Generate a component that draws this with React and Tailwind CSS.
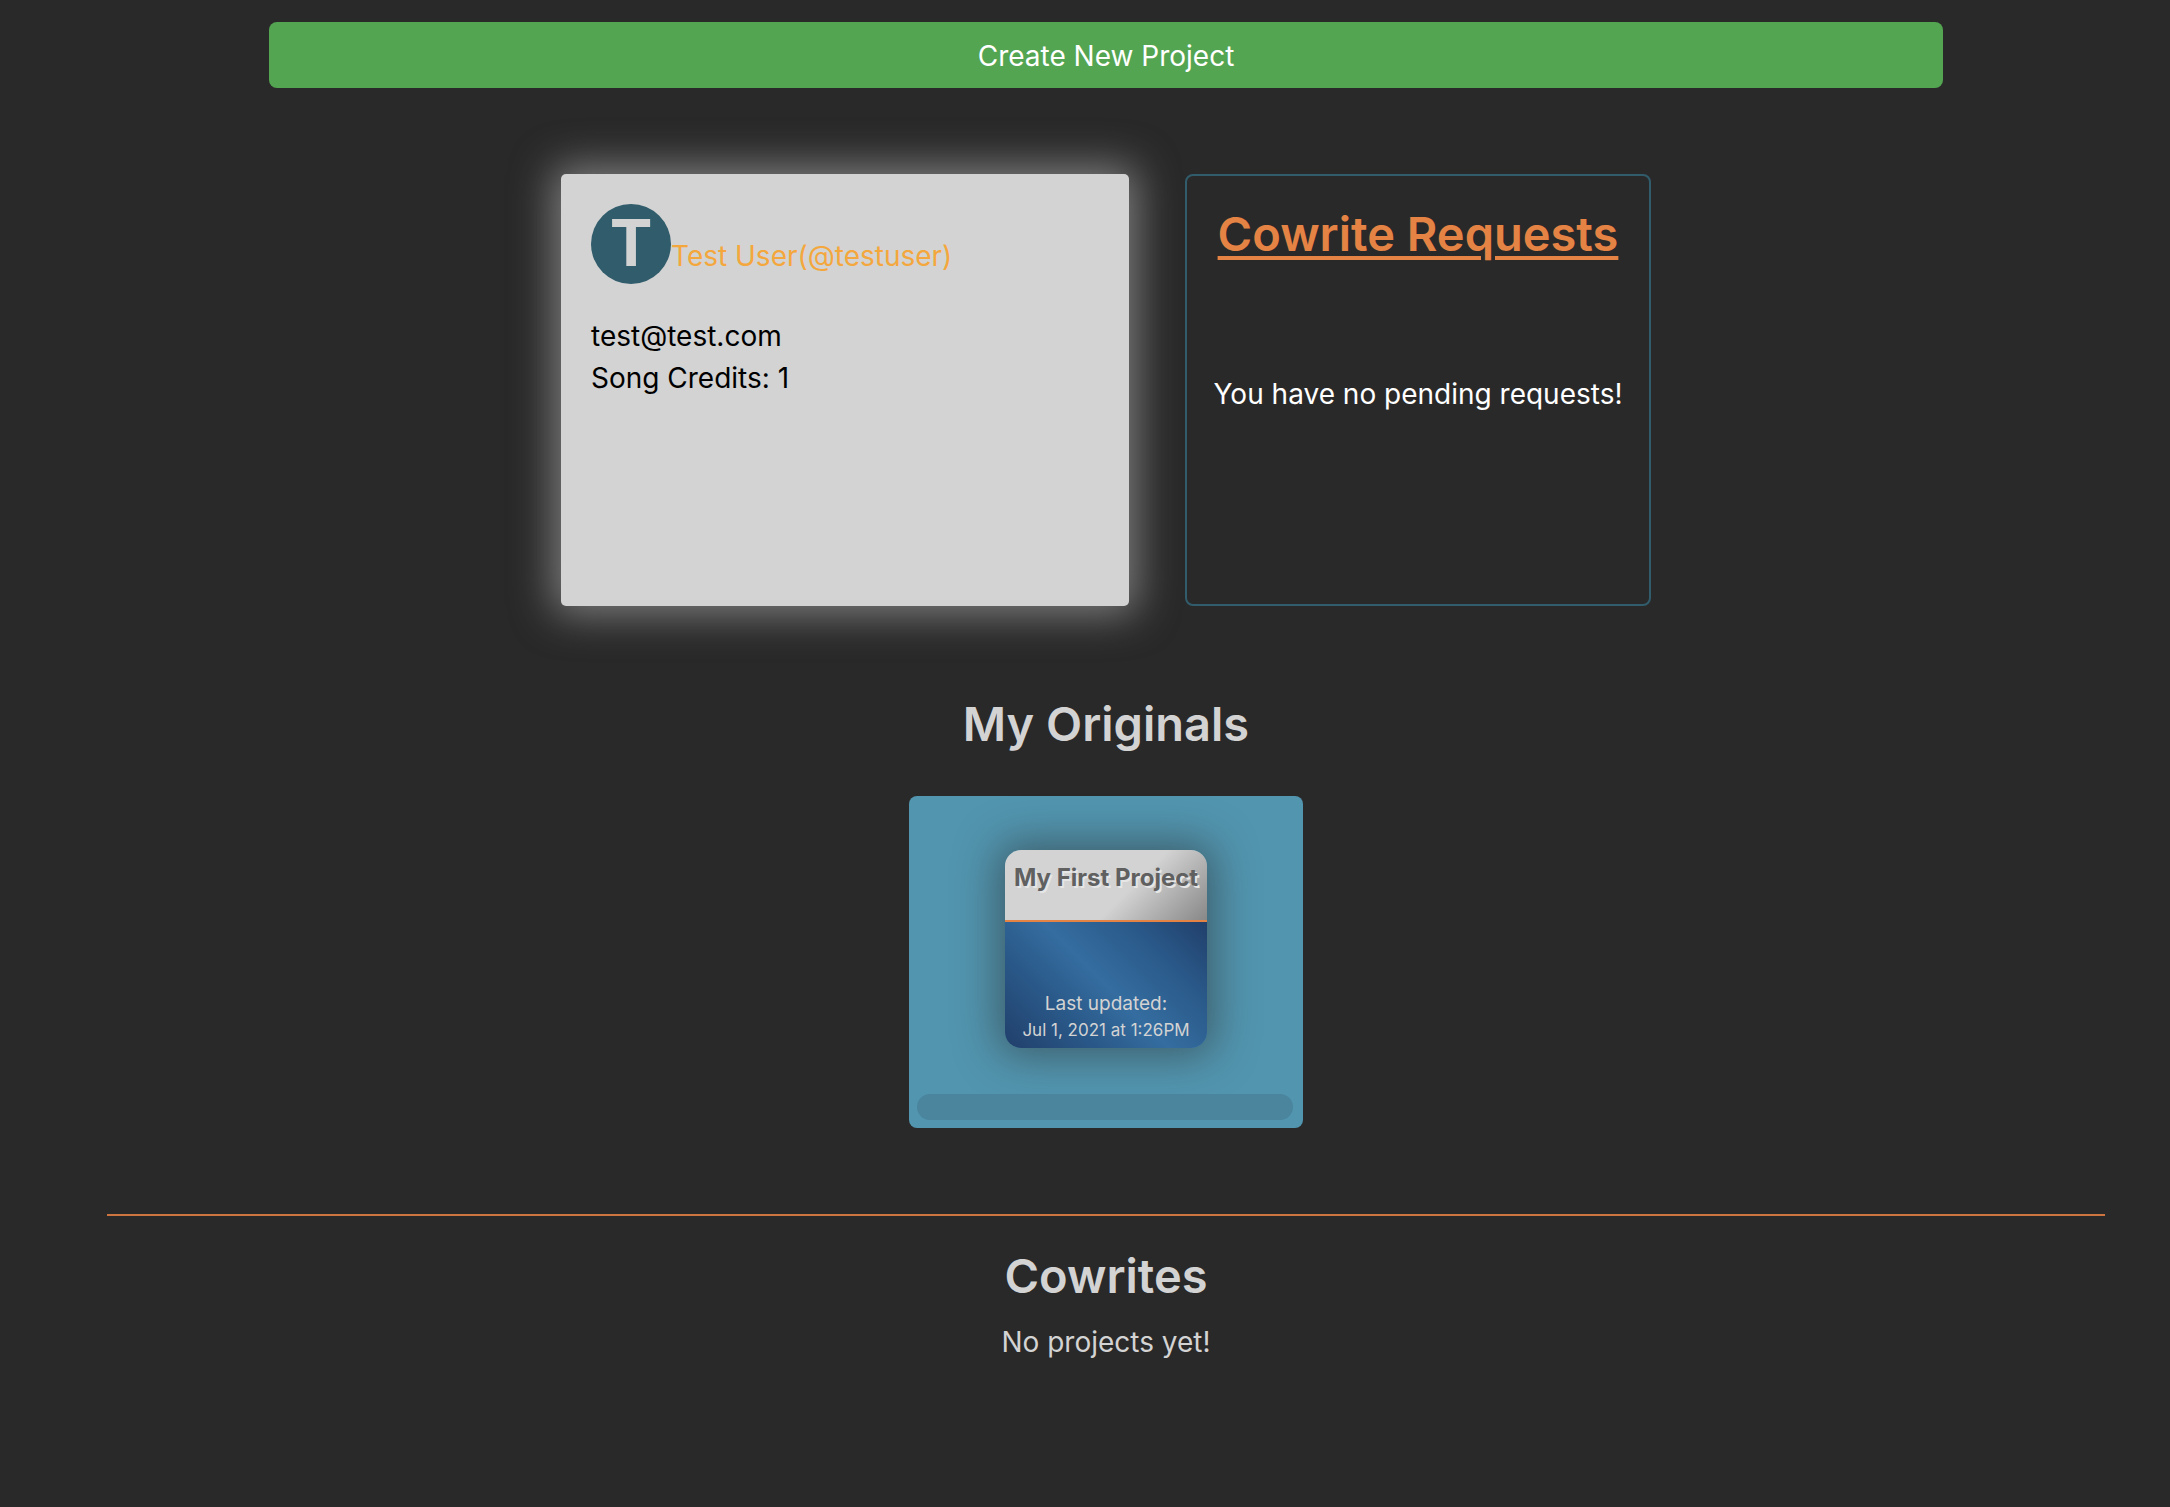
const heading = "text-[47px] leading-[60px] font-semibold";

function ProfileCard() {
  return (
    <section className="min-h-[432px] w-[568px] rounded-[5px] bg-[#d3d3d3] p-[30px] text-black shadow-[0_0_40px_8px_rgba(211,211,211,0.5)]">
      <div className="flex items-baseline">
        <span className="h-20 w-20 shrink-0 rounded-full bg-[#315c6b] text-center text-[64px] leading-[78px] font-bold text-[#d3d3d3]">
          T
        </span>
        <a href="#profile" className="text-[#f4a73c]">
          Test User(@testuser)
        </a>
      </div>
      <p className="mt-[31px]">test@test.com</p>
      <p>Song Credits: 1</p>
    </section>
  );
}

function CowriteRequests() {
  return (
    <section className="flex w-[466px] flex-col items-center rounded-lg border-2 border-[#315c6b] pt-7 text-center">
      <h2 className={heading + " whitespace-nowrap text-[#e58345] underline decoration-4 underline-offset-[5px]"}>
        Cowrite Requests
      </h2>
      <p className="mt-[109px] whitespace-nowrap text-white">You have no pending requests!</p>
    </section>
  );
}

function ProjectTile({ title, updated }) {
  return (
    <a
      href="#project"
      className="flex h-[198px] w-[202px] flex-col overflow-hidden rounded-2xl text-center text-[#d3d3d3] shadow-[0_0_40px_8px_rgba(41,41,41,0.5)]"
    >
      <h3 className="h-[72px] border-b-2 border-[#e58345] bg-[linear-gradient(135deg,#d3d3d3_60%,#888888_100%)] pt-3 text-[24px] leading-8 font-bold whitespace-nowrap text-[#606060] [text-shadow:2px_2px_#e6e6e6]">
        {title}
      </h3>
      <div className="flex flex-1 flex-col justify-end bg-[linear-gradient(45deg,#213f6b_0%,#2a5a8a_30%,#356da0_50%,#2a5a8a_75%,#213f6b_100%)] pb-[5px]">
        <p className="text-[19px] leading-[26px]">Last updated:</p>
        <p className="text-[17px] leading-[26px]">{updated}</p>
      </div>
    </a>
  );
}

export default function App() {
  return (
    <main className="min-h-screen bg-[#292929] pt-[22px] pr-[65px] pb-16 pl-[107px] font-['Inter',sans-serif] text-[28px] leading-[42px] text-[#d3d3d3]">
      <div className="px-[162px]">
        <button className="h-[66px] w-full rounded-lg bg-[#53a551] pt-0.5 text-white">
          Create New Project
        </button>
      </div>

      <div className="mt-[86px] flex justify-center gap-14">
        <ProfileCard />
        <CowriteRequests />
      </div>

      <section className="mt-[88px] flex flex-col items-center">
        <h2 className={heading}>My Originals</h2>
        <div className="mt-[42px] flex w-[394px] flex-col items-center rounded-lg bg-[#5295af] px-2 pt-[54px] pb-2">
          <ProjectTile title="My First Project" updated="Jul 1, 2021 at 1:26PM" />
          <div className="mt-[46px] mr-0.5 h-[26px] w-[376px] rounded-full bg-[#4a849d]" />
        </div>
      </section>

      <hr className="mt-[86px] border-t-2 border-[#cd7540]" />

      <section className="mt-[30px] text-center">
        <h2 className={heading}>Cowrites</h2>
        <p className="mt-[15px]">No projects yet!</p>
      </section>
    </main>
  );
}
